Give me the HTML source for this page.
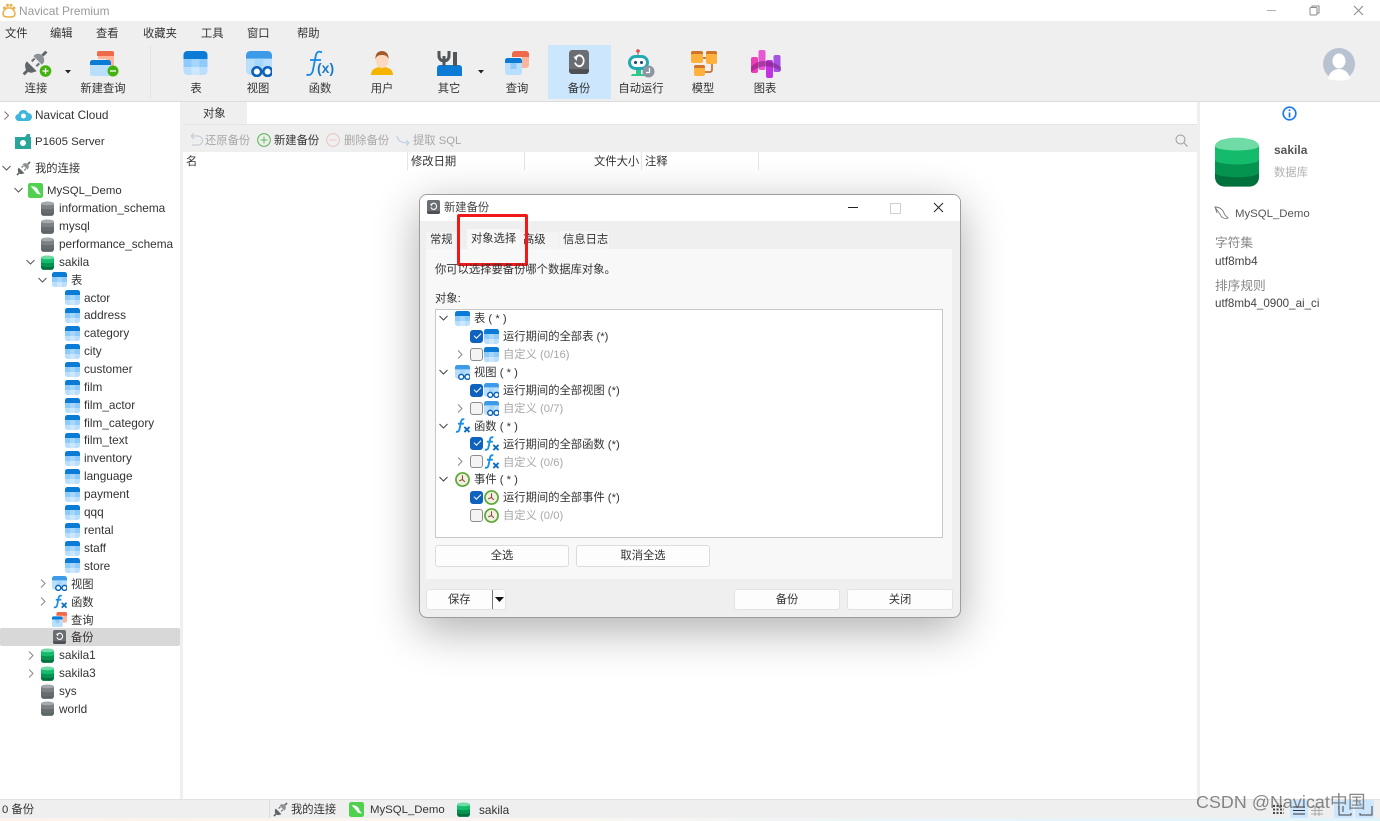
<!DOCTYPE html>
<html lang="zh"><head><meta charset="utf-8"><title>Navicat Premium</title>
<style>
html,body{margin:0;padding:0;width:1380px;height:821px;overflow:hidden;background:#fff}
body{position:relative;font:11.3px/16px "Liberation Sans","Noto Sans CJK SC",sans-serif;color:#333}
.b{position:absolute}
.t{position:absolute;white-space:nowrap;line-height:16px;margin-top:1px}
.c{transform:translateX(-50%)}
.l{font-size:11.8px;margin-top:0}
.m{font-size:11.4px}
.g{color:#a8a8a8}
svg.i{position:absolute;overflow:visible}
.btn{position:absolute;background:#fdfdfd;border:1px solid #dcdcdc;border-radius:3px;box-sizing:border-box;text-align:center;line-height:20px}
.cb{position:absolute;width:13px;height:13px;box-sizing:border-box;border:1px solid #8c8c8c;border-radius:3px;background:#f4f4f4}
.cb.on{background:#0f62bd;border-color:#0f62bd}
.cb.on:after{content:"";position:absolute;left:3px;top:2px;width:6px;height:3px;border-left:1px solid #fff;border-bottom:1px solid #fff;transform:rotate(-45deg)}
</style></head><body>
<svg width="0" height="0" style="position:absolute">
<defs>
<symbol id="tbl" viewBox="0 0 24 24"><rect width="24" height="24" rx="4" fill="#b9dffd"/><path d="M0 8V4a4 4 0 0 1 4-4h16a4 4 0 0 1 4 4v4z" fill="#0b7bd6"/><rect x="0" y="8" width="8" height="8" fill="#8ecbfb"/><rect x="8" y="8" width="8" height="8" fill="#a5d6fc"/><rect x="16" y="8" width="8" height="8" fill="#8ecbfb"/><rect x="8" y="16" width="8" height="8" fill="#cde8fe"/></symbol>
<symbol id="view" viewBox="0 0 24 24"><rect width="24" height="22" rx="4" fill="#b9dffd"/><path d="M0 7V4a4 4 0 0 1 4-4h16a4 4 0 0 1 4 4v3z" fill="#3d9ae8"/><rect x="8" y="7" width="8" height="7" fill="#a5d6fc"/><circle cx="10" cy="19" r="4" fill="#fff" stroke="#0b62b8" stroke-width="2.4"/><circle cx="20" cy="19" r="4" fill="#fff" stroke="#0b62b8" stroke-width="2.4"/></symbol>
<symbol id="fx" viewBox="0 0 16 16"><path d="M10 1.500C7.800 .8 6.800 2 6.400 4L4.800 12C4.400 14 3.200 15 1 14.600M3.200 6H9.500" fill="none" stroke="#1a8fe8" stroke-width="2"/><path d="M10 9.500l5.500 5.500M15.500 9.500l-5.500 5.500" stroke="#0b6cc4" stroke-width="2"/></symbol>
<symbol id="dbg" viewBox="0 0 14 16"><rect y="1" width="14" height="15" rx="3" fill="#5d6468"/><ellipse cx="7" cy="3" rx="7" ry="2.600" fill="#a4a9ad"/><path d="M0 3c0 2 14 2 14 0v4.500c0 2-14 2-14 0z" fill="#7b8185"/><path d="M0 7.500c0 2 14 2 14 0v4c0 2-14 2-14 0z" fill="#666c70"/></symbol>
<symbol id="dbv" viewBox="0 0 14 16"><rect y="1" width="14" height="15" rx="3" fill="#00703c"/><ellipse cx="7" cy="3" rx="7" ry="2.600" fill="#6fdca5"/><path d="M0 3c0 2 14 2 14 0v4.500c0 2-14 2-14 0z" fill="#14bb6b"/><path d="M0 7.500c0 2 14 2 14 0v4c0 2-14 2-14 0z" fill="#059350"/></symbol>
<symbol id="clk" viewBox="0 0 16 16"><circle cx="8" cy="8" r="7" fill="#f1efe2" stroke="#58a832" stroke-width="1.800"/><path d="M8 3.500V8L4.500 9.500M8 8l2.500 2.500" fill="none" stroke="#8a4a32" stroke-width="1.100"/></symbol>
<symbol id="plug" viewBox="0 0 16 16"><path d="M1 15L3.800 12.200" stroke="#5f6569" stroke-width="1.800"/><path d="M3 7L9 13a3.800 3.800 0 0 1-1.500.500L6 14a3.800 3.800 0 0 1-4-3.500 3.800 3.800 0 0 1 1-3.500z" fill="#5f6569"/><path d="M6 7L7.800 5.200M8.800 10L10.600 8.200" stroke="#6c7276" stroke-width="1.300"/><path d="M7 3.800L12.200 9A3.600 3.600 0 0 0 13 4 3.600 3.600 0 0 0 7 3.800z" fill="#8b9195"/><path d="M12.600 3.400L15 1" stroke="#5f6569" stroke-width="1.800"/></symbol>
<symbol id="dol" viewBox="0 0 16 16"><rect x="0" y="0" width="16" height="16" rx="2.500" fill="#4fd14f"/><path d="M3 3.500C7 3 10 5 11 8c.5 1.500 1.500 3 3 4-3 .5-5-.5-6-2.500C7 7.500 5 6.500 3 3.500z" fill="#fff"/></symbol>
<symbol id="qry" viewBox="0 0 24 24"><path d="M9 0h12a3 3 0 0 1 3 3v11a3 3 0 0 1-3 3h-4V6H9z" fill="#fdb49c"/><path d="M7 6V3a3 3 0 0 1 3-3h11a3 3 0 0 1 3 3v3z" fill="#ee6a4a"/><rect x="0" y="7" width="17" height="17" rx="2.500" fill="#b9dffd"/><path d="M0 12V9.500A2.500 2.500 0 0 1 2.500 7h12A2.500 2.500 0 0 1 17 9.500V12z" fill="#0b7bd6"/><rect x="5.500" y="12" width="6" height="6" fill="#8ecbfb"/></symbol>
<symbol id="bak" viewBox="0 0 20 20" preserveAspectRatio="none"><rect width="20" height="20" rx="3" fill="#6a6e73"/><path d="M0 16h20v1a3 3 0 0 1-3 3H3a3 3 0 0 1-3-3z" fill="#4c4f53"/><path d="M6.500 6.500A4.500 4.500 0 1 1 6 10.500" fill="none" stroke="#fff" stroke-width="1.600"/><path d="M4.500 5.500l4 .2-1 3.500z" fill="#fff"/></symbol>
</defs></svg>

<!-- title bar -->
<svg class="i" style="left:2px;top:3px" width="14" height="15" viewBox="0 0 14 15"><path d="M7 5c3-1 6 3 6 6s-3 3-6 3-6 0-6-3 3-7 6-6z" fill="#fff" stroke="#e6b14e" stroke-width="1.500"/><circle cx="2.500" cy="5" r="1.500" fill="#e6b14e"/><circle cx="5.500" cy="2.200" r="1.500" fill="#e6b14e"/><circle cx="9" cy="2.200" r="1.500" fill="#e6b14e"/><circle cx="12" cy="5" r="1.500" fill="#e6b14e"/></svg>
<span class="t" style="left:19px;top:2px;color:#9a9a9a;font-size:11.9px">Navicat Premium</span>
<div class="b" style="left:1267px;top:10px;width:9px;height:1px;background:#b0b0b0"></div>
<svg class="i" style="left:1309px;top:5px" width="11" height="11" viewBox="0 0 11 11"><path d="M3 2.500V1h7v7H8.500" fill="none" stroke="#8a8a8a"/><rect x="1" y="2.500" width="7" height="7.500" rx="1" fill="none" stroke="#8a8a8a"/></svg>
<svg class="i" style="left:1353px;top:5px" width="11" height="11" viewBox="0 0 11 11"><path d="M1 1l9 9M10 1l-9 9" stroke="#8a8a8a"/></svg>

<!-- menu + toolbar -->
<div class="b" style="left:0;top:21px;width:1380px;height:80px;background:#efefef"></div>
<div class="b" style="left:0;top:101px;width:1380px;height:1px;background:#dcdcdc"></div>
<span class="t" style="left:5px;top:25px">文件</span><span class="t" style="left:50px;top:25px">编辑</span><span class="t" style="left:96px;top:25px">查看</span><span class="t" style="left:143px;top:25px">收藏夹</span><span class="t" style="left:201px;top:25px">工具</span><span class="t" style="left:247px;top:25px">窗口</span><span class="t" style="left:297px;top:25px">帮助</span>
<div class="b" style="left:150px;top:46px;width:1px;height:52px;background:#e4e4e4"></div>
<div class="b" style="left:548px;top:45px;width:63px;height:54px;background:#cbe6fd"></div>

<svg class="i" style="left:22px;top:50px" width="30" height="28" viewBox="0 0 30 28"><use href="#plug" x="0" y="0" width="26" height="26"/><circle cx="23.500" cy="21" r="5.800" fill="#45b30f"/><path d="M20.500 21h6M23.500 18v6" stroke="#fff" stroke-width="1.300"/></svg>
<svg class="i" style="left:65px;top:70px" width="6" height="4"><path d="M0 0h6L3 3.500z" fill="#222"/></svg>
<svg class="i" style="left:90px;top:50px" width="29" height="27" viewBox="0 0 29 27"><path d="M8 1h14a2 2 0 0 1 2 2v16h-8V9H8z" fill="#fdb49c"/><path d="M7 6V3a2 2 0 0 1 2-2h13a2 2 0 0 1 2 2v3z" fill="#ee6a4a"/><rect x="0" y="10" width="21" height="16" rx="2.500" fill="#b9dffd"/><path d="M0 15v-2.500A2.500 2.500 0 0 1 2.500 10h16a2.500 2.500 0 0 1 2.500 2.500V15z" fill="#0b7bd6"/><circle cx="23" cy="21" r="5.500" fill="#45b30f"/><path d="M20 21h6" stroke="#fff" stroke-width="1.300"/></svg>
<svg class="i" style="left:183px;top:51px" width="25" height="24"><use href="#tbl"/></svg>
<svg class="i" style="left:246px;top:51px" width="26" height="26"><use href="#view"/></svg>
<svg class="i" style="left:305px;top:50px" width="30" height="27" viewBox="0 0 30 27"><path d="M17 2.500C13.500 .5 11.500 2 10.700 6L8 20C7.300 24 5 26 1.500 24.500M5 10h11" fill="none" stroke="#1288e6" stroke-width="1.800"/><text x="12" y="23" font-family="Liberation Sans,sans-serif" font-size="14" font-weight="bold" fill="#1a7cc9">(x)</text></svg>
<svg class="i" style="left:371px;top:50px" width="22" height="26" viewBox="0 0 22 26"><path d="M0 25c0-6 5-8 11-8s11 2 11 8z" fill="#f5b400"/><ellipse cx="11" cy="10" rx="6.500" ry="8" fill="#fbd9be"/><path d="M4.500 9C4 3 8 1 11 1s7 2 6.500 8C16 5 13 5 11 5S6 5 4.500 9z" fill="#a35a2a"/></svg>
<svg class="i" style="left:437px;top:50px" width="25" height="26" viewBox="0 0 25 26"><path d="M0 18a3 3 0 0 1 3-3h19a3 3 0 0 1 3 3v8H0z" fill="#0b7bd6"/><path d="M7 16V6M2 1v5a5 5 0 0 0 10 0V1" fill="none" stroke="#50565a" stroke-width="3"/><path d="M18 16V2" stroke="#50565a" stroke-width="4"/></svg>
<svg class="i" style="left:478px;top:70px" width="6" height="4"><path d="M0 0h6L3 3.500z" fill="#222"/></svg>
<svg class="i" style="left:505px;top:50px" width="24" height="26"><use href="#qry"/></svg>
<svg class="i" style="left:569px;top:50px" width="20" height="24"><use href="#bak"/></svg>
<svg class="i" style="left:627px;top:49px" width="28" height="29" viewBox="0 0 28 29"><circle cx="11" cy="2" r="1.800" fill="#ef4444"/><path d="M11 3v3" stroke="#777"/><rect x="1" y="6" width="21" height="15" rx="7.500" fill="#23a9b3"/><rect x="4" y="9" width="15" height="9" rx="4.500" fill="#fff"/><circle cx="8.500" cy="13.500" r="1.500" fill="#1c3d72"/><circle cx="14.500" cy="13.500" r="1.500" fill="#1c3d72"/><path d="M5 25h13l2 2H4z" fill="#2fc78c"/><rect x="9" y="21" width="5" height="4" fill="#2fc78c"/><circle cx="21.500" cy="22.500" r="6" fill="#8d97a3"/><path d="M22.500 19v4.500H19" fill="none" stroke="#fff" stroke-width="1.200"/></svg>
<svg class="i" style="left:690px;top:50px" width="27" height="26" viewBox="0 0 27 26"><path d="M13 8h4M22 13v7a2 2 0 0 1-2 2h-6" fill="none" stroke="#c9702a" stroke-width="1.700"/><rect x="1" y="1" width="12" height="12" rx="2" fill="#ffb13d"/><path d="M1 4V3a2 2 0 0 1 2-2h8a2 2 0 0 1 2 2v1z" fill="#d0742c"/><rect x="16" y="1" width="11" height="13" rx="2" fill="#ffb13d"/><path d="M16 4V3a2 2 0 0 1 2-2h7a2 2 0 0 1 2 2v1z" fill="#d0742c"/><rect x="4" y="15" width="11" height="11" rx="2" fill="#ffb13d"/><path d="M4 18v-1a2 2 0 0 1 2-2h7a2 2 0 0 1 2 2v1z" fill="#d0742c"/></svg>
<svg class="i" style="left:751px;top:49px" width="30" height="29" viewBox="0 0 30 29"><rect x="0" y="8" width="7" height="16" rx="2" fill="#ee3fb5"/><rect x="7.500" y="1" width="7" height="20" rx="2" fill="#e857d2"/><rect x="15" y="11" width="7" height="18" rx="2" fill="#c133df"/><rect x="22.500" y="6" width="7" height="17" rx="2" fill="#a552e4"/><path d="M0 18c8-9 20-7 30 0v4c-10-6-20-7-30 1z" fill="#7c1f7c" opacity=".55"/></svg>

<span class="t c" style="left:36px;top:80px">连接</span><span class="t c" style="left:103px;top:80px">新建查询</span><span class="t c" style="left:196px;top:80px">表</span><span class="t c" style="left:258px;top:80px">视图</span><span class="t c" style="left:320px;top:80px">函数</span><span class="t c" style="left:382px;top:80px">用户</span><span class="t c" style="left:449px;top:80px">其它</span><span class="t c" style="left:517px;top:80px">查询</span><span class="t c" style="left:579px;top:80px">备份</span><span class="t c" style="left:641px;top:80px">自动运行</span><span class="t c" style="left:703px;top:80px">模型</span><span class="t c" style="left:765px;top:80px">图表</span>

<svg class="i" style="left:1323px;top:48px" width="32" height="32" viewBox="0 0 32 32"><circle cx="16" cy="16" r="16" fill="#b9c2d0"/><ellipse cx="16" cy="13" rx="6.500" ry="7.500" fill="#fff"/><path d="M5 31c1-7 6-10 11-10s10 3 11 10c-3 1-7 1.500-11 1.500S8 32 5 31z" fill="#fff"/></svg>

<!-- gutters -->
<div class="b" style="left:180px;top:102px;width:3px;height:697px;background:#efefef"></div>
<div class="b" style="left:1197px;top:102px;width:3px;height:697px;background:#efefef"></div>

<!-- main tabs -->
<div class="b" style="left:183px;top:102px;width:64px;height:23px;background:#efefef"></div>
<span class="t" style="left:203px;top:105px">对象</span>
<div class="b" style="left:183px;top:124px;width:1014px;height:1px;background:#e4e4e4"></div>
<div class="b" style="left:183px;top:125px;width:1014px;height:27px;background:#efefef"></div>
<svg class="i" style="left:188px;top:133px" width="15" height="14" viewBox="0 0 15 14"><path d="M3 3h7a4 4 0 0 1 0 9H4M3 3l3-2.500M3 3l3 3" fill="none" stroke="#c4ced6" stroke-width="1.200"/></svg>
<span class="t g" style="left:205px;top:132px">还原备份</span>
<svg class="i" style="left:257px;top:133px" width="14" height="14" viewBox="0 0 14 14"><circle cx="7" cy="7" r="6.300" fill="none" stroke="#5cb85c" stroke-width="1.100"/><path d="M3.500 7h7M7 3.500v7" stroke="#5cb85c"/></svg>
<span class="t" style="left:274px;top:132px">新建备份</span>
<svg class="i" style="left:326px;top:133px" width="14" height="14" viewBox="0 0 14 14"><circle cx="7" cy="7" r="6.300" fill="none" stroke="#e8c8c4" stroke-width="1.100"/><path d="M3.500 7h7" stroke="#e8c8c4"/></svg>
<span class="t g" style="left:344px;top:132px">删除备份</span>
<svg class="i" style="left:396px;top:133px" width="15" height="14" viewBox="0 0 15 14"><path d="M1 3c1 5 4 7 12 7M13 10l-3-3M13 10l-3 3" fill="none" stroke="#bcd2e4" stroke-width="1.200"/></svg>
<span class="t g" style="left:413px;top:132px">提取 SQL</span>
<svg class="i" style="left:1175px;top:134px" width="13" height="13" viewBox="0 0 13 13"><circle cx="5.500" cy="5.500" r="4.500" fill="none" stroke="#9a9a9a"/><path d="M9 9l3.500 3.500" stroke="#9a9a9a"/></svg>
<span class="t" style="left:186px;top:153px">名</span>
<div class="b" style="left:407px;top:152px;width:1px;height:18px;background:#e4e4e4"></div>
<span class="t" style="left:411px;top:153px">修改日期</span>
<div class="b" style="left:524px;top:152px;width:1px;height:18px;background:#e4e4e4"></div>
<span class="t" style="left:594px;top:153px">文件大小</span>
<div class="b" style="left:641px;top:152px;width:1px;height:18px;background:#e4e4e4"></div>
<span class="t" style="left:645px;top:153px">注释</span>
<div class="b" style="left:758px;top:152px;width:1px;height:18px;background:#e4e4e4"></div>

<!-- sidebar -->
<svg class="i" style="left:3px;top:111px" width="7" height="9" viewBox="0 0 7 9"><path d="M1.500 .5l4 4-4 4" fill="none" stroke="#777"/></svg>
<svg class="i" style="left:15px;top:108px" width="16" height="14" viewBox="0 0 16 14"><path d="M4 13a3.500 3.500 0 0 1-.5-7A5 5 0 0 1 13 5a4 4 0 0 1 0 8z" fill="#3eb6dc"/><circle cx="8.500" cy="8" r="2.500" fill="#fff"/></svg>
<span class="t l" style="left:35px;top:107px">Navicat Cloud</span>
<svg class="i" style="left:15px;top:134px" width="16" height="15" viewBox="0 0 16 15"><path d="M0 3h16v12H0z" fill="#2aa59a"/><path d="M10 3l2-3h3v3z" fill="#2aa59a"/><circle cx="8" cy="9" r="3" fill="#fff"/></svg>
<span class="t m" style="left:35px;top:133px">P1605 Server</span>
<svg class="i" style="left:2px;top:165px" width="9" height="6" viewBox="0 0 9 6"><path d="M.5 1l4 4 4-4" fill="none" stroke="#555"/></svg>
<svg class="i" style="left:16px;top:161px" width="15" height="15"><use href="#plug"/></svg>
<span class="t" style="left:35px;top:160px">我的连接</span>
<svg class="i" style="left:14px;top:187px" width="9" height="6" viewBox="0 0 9 6"><path d="M.5 1l4 4 4-4" fill="none" stroke="#555"/></svg>
<svg class="i" style="left:28px;top:183px" width="15" height="15"><use href="#dol"/></svg>
<span class="t m" style="left:47px;top:182px">MySQL_Demo</span>
<svg class="i" style="left:41px;top:201px" width="13" height="15"><use href="#dbg"/></svg><span class="t l" style="left:59px;top:200px">information_schema</span>
<svg class="i" style="left:41px;top:219px" width="13" height="15"><use href="#dbg"/></svg><span class="t l" style="left:59px;top:218px">mysql</span>
<svg class="i" style="left:41px;top:237px" width="13" height="15"><use href="#dbg"/></svg><span class="t l" style="left:59px;top:236px">performance_schema</span>
<svg class="i" style="left:26px;top:259px" width="9" height="6" viewBox="0 0 9 6"><path d="M.5 1l4 4 4-4" fill="none" stroke="#555"/></svg>
<svg class="i" style="left:41px;top:255px" width="13" height="15"><use href="#dbv"/></svg><span class="t l" style="left:59px;top:254px">sakila</span>
<svg class="i" style="left:38px;top:277px" width="9" height="6" viewBox="0 0 9 6"><path d="M.5 1l4 4 4-4" fill="none" stroke="#555"/></svg>
<svg class="i" style="left:52px;top:272px" width="15" height="15"><use href="#tbl"/></svg><span class="t" style="left:71px;top:272px">表</span>
<svg class="i" style="left:65px;top:290px" width="15" height="15"><use href="#tbl"/></svg><span class="t l" style="left:84px;top:290px">actor</span>
<svg class="i" style="left:65px;top:308px" width="15" height="15"><use href="#tbl"/></svg><span class="t l" style="left:84px;top:307px">address</span>
<svg class="i" style="left:65px;top:326px" width="15" height="15"><use href="#tbl"/></svg><span class="t l" style="left:84px;top:325px">category</span>
<svg class="i" style="left:65px;top:344px" width="15" height="15"><use href="#tbl"/></svg><span class="t l" style="left:84px;top:343px">city</span>
<svg class="i" style="left:65px;top:362px" width="15" height="15"><use href="#tbl"/></svg><span class="t l" style="left:84px;top:361px">customer</span>
<svg class="i" style="left:65px;top:380px" width="15" height="15"><use href="#tbl"/></svg><span class="t l" style="left:84px;top:379px">film</span>
<svg class="i" style="left:65px;top:398px" width="15" height="15"><use href="#tbl"/></svg><span class="t l" style="left:84px;top:397px">film_actor</span>
<svg class="i" style="left:65px;top:415px" width="15" height="15"><use href="#tbl"/></svg><span class="t l" style="left:84px;top:415px">film_category</span>
<svg class="i" style="left:65px;top:433px" width="15" height="15"><use href="#tbl"/></svg><span class="t l" style="left:84px;top:432px">film_text</span>
<svg class="i" style="left:65px;top:451px" width="15" height="15"><use href="#tbl"/></svg><span class="t l" style="left:84px;top:450px">inventory</span>
<svg class="i" style="left:65px;top:469px" width="15" height="15"><use href="#tbl"/></svg><span class="t l" style="left:84px;top:468px">language</span>
<svg class="i" style="left:65px;top:487px" width="15" height="15"><use href="#tbl"/></svg><span class="t l" style="left:84px;top:486px">payment</span>
<svg class="i" style="left:65px;top:505px" width="15" height="15"><use href="#tbl"/></svg><span class="t l" style="left:84px;top:504px">qqq</span>
<svg class="i" style="left:65px;top:523px" width="15" height="15"><use href="#tbl"/></svg><span class="t l" style="left:84px;top:522px">rental</span>
<svg class="i" style="left:65px;top:541px" width="15" height="15"><use href="#tbl"/></svg><span class="t l" style="left:84px;top:540px">staff</span>
<svg class="i" style="left:65px;top:558px" width="15" height="15"><use href="#tbl"/></svg><span class="t l" style="left:84px;top:558px">store</span>
<svg class="i" style="left:40px;top:579px" width="6" height="9" viewBox="0 0 6 9"><path d="M1 .5l4 4-4 4" fill="none" stroke="#888"/></svg>
<svg class="i" style="left:52px;top:576px" width="15" height="15"><use href="#view"/></svg><span class="t" style="left:71px;top:576px">视图</span>
<svg class="i" style="left:40px;top:597px" width="6" height="9" viewBox="0 0 6 9"><path d="M1 .5l4 4-4 4" fill="none" stroke="#888"/></svg>
<svg class="i" style="left:53px;top:594px" width="14" height="15"><use href="#fx"/></svg><span class="t" style="left:71px;top:594px">函数</span>
<svg class="i" style="left:52px;top:612px" width="15" height="15"><use href="#qry"/></svg><span class="t" style="left:71px;top:612px">查询</span>
<div class="b" style="left:0;top:628px;width:180px;height:18px;background:#d8d8d8;border-radius:2px"></div>
<svg class="i" style="left:53px;top:630px" width="13" height="14"><use href="#bak"/></svg><span class="t" style="left:71px;top:629px">备份</span>
<svg class="i" style="left:28px;top:651px" width="6" height="9" viewBox="0 0 6 9"><path d="M1 .5l4 4-4 4" fill="none" stroke="#888"/></svg>
<svg class="i" style="left:41px;top:648px" width="13" height="15"><use href="#dbv"/></svg><span class="t l" style="left:59px;top:647px">sakila1</span>
<svg class="i" style="left:28px;top:669px" width="6" height="9" viewBox="0 0 6 9"><path d="M1 .5l4 4-4 4" fill="none" stroke="#888"/></svg>
<svg class="i" style="left:41px;top:666px" width="13" height="15"><use href="#dbv"/></svg><span class="t l" style="left:59px;top:665px">sakila3</span>
<svg class="i" style="left:41px;top:684px" width="13" height="15"><use href="#dbg"/></svg><span class="t l" style="left:59px;top:683px">sys</span>
<svg class="i" style="left:41px;top:701px" width="13" height="15"><use href="#dbg"/></svg><span class="t l" style="left:59px;top:701px">world</span>

<!-- right panel -->
<svg class="i" style="left:1282px;top:106px" width="15" height="15" viewBox="0 0 15 15"><circle cx="7.500" cy="7.500" r="6.300" fill="#fff" stroke="#1a7ae8" stroke-width="1.700"/><path d="M7.500 6.500v5" stroke="#1a7ae8" stroke-width="1.700"/><circle cx="7.500" cy="4.300" r="1" fill="#1a7ae8"/></svg>
<svg class="i" style="left:1215px;top:136px" width="44" height="51"><use href="#dbv"/></svg>
<span class="t" style="left:1274px;top:141px;font-weight:bold;color:#555;font-size:12px">sakila</span>
<span class="t" style="left:1274px;top:164px;color:#b0b0b0">数据库</span>
<svg class="i" style="left:1214px;top:206px" width="15" height="14" viewBox="0 0 15 14"><path d="M1 1c5 0 8 3 9 6 .5 2 2 3 4 5-3 1-6 0-7-2-1-3-4-5-6-9zM1 1l2 6" fill="none" stroke="#777" stroke-width=".9"/></svg>
<span class="t m" style="left:1235px;top:205px;color:#555">MySQL_Demo</span>
<span class="t" style="left:1215px;top:234px;color:#888;font-size:12.700px">字符集</span>
<span class="t l" style="left:1215px;top:253px;color:#444">utf8mb4</span>
<span class="t" style="left:1215px;top:277px;color:#888;font-size:12.700px">排序规则</span>
<span class="t" style="left:1215px;top:295px;color:#444;font-size:11.600px">utf8mb4_0900_ai_ci</span>

<!-- status bar -->
<div class="b" style="left:0;top:799px;width:1380px;height:19px;background:#efefef;border-top:1px solid #e2e2e2;box-sizing:border-box"></div>
<div class="b" style="left:0;top:818px;width:1380px;height:3px;background:linear-gradient(90deg,#fdf1ec,#fbf5f0 40%,#e6f4fa 75%,#dff3fb)"></div>
<span class="t" style="left:2px;top:801px">0 备份</span>
<div class="b" style="left:269px;top:800px;width:1px;height:18px;background:#dcdcdc"></div>
<svg class="i" style="left:273px;top:802px" width="15" height="15"><use href="#plug"/></svg>
<span class="t" style="left:291px;top:801px">我的连接</span>
<svg class="i" style="left:349px;top:802px" width="15" height="15"><use href="#dol"/></svg>
<span class="t m" style="left:370px;top:801px">MySQL_Demo</span>
<svg class="i" style="left:457px;top:802px" width="13" height="15"><use href="#dbv"/></svg>
<span class="t l" style="left:479px;top:802px">sakila</span>
<div class="b" style="left:1290px;top:800px;width:18px;height:18px;background:#cbe6fd;border-radius:2px"></div>
<div class="b" style="left:1334px;top:800px;width:19px;height:18px;background:#cbe6fd;border-radius:2px"></div>
<div class="b" style="left:1355px;top:800px;width:19px;height:18px;background:#cbe6fd;border-radius:2px"></div>
<svg class="i" style="left:1272px;top:805px" width="100" height="12" viewBox="0 0 100 12"><path d="M1 1h11M1 4.500h11M1 8h11" stroke="#444" stroke-width="2" stroke-dasharray="2 1.500"/><path d="M21 2h12M21 5.500h12M21 9h12" stroke="#333"/><path d="M39 2h12M39 5.500h12M39 9h12M43 1v10M47 1v10" stroke="#aaa"/><path d="M67 1v9h12V8M71 1v6" fill="none" stroke="#444"/><path d="M88 8v2h12V1" fill="none" stroke="#444"/></svg>
<span class="t" style="left:1196px;top:791px;font-size:17.800px;line-height:20px;color:rgba(90,90,90,.72);letter-spacing:.1px">CSDN @Navicat中国</span>

<!-- dialog -->
<div class="b" style="left:419px;top:194px;width:542px;height:424px;box-sizing:border-box;background:#efefef;border:1px solid #9c9c9c;border-radius:8px;box-shadow:0 12px 45px rgba(0,0,0,.32)"></div>
<div class="b" style="left:420px;top:195px;width:540px;height:26px;background:#fff;border-radius:7px 7px 0 0"></div>
<svg class="i" style="left:427px;top:200px" width="13" height="14"><use href="#bak"/></svg>
<span class="t" style="left:444px;top:199px;color:#444">新建备份</span>
<div class="b" style="left:848px;top:207px;width:10px;height:1px;background:#222"></div>
<div class="b" style="left:890px;top:203px;width:9px;height:9px;border:1px solid #d0d0d0"></div>
<svg class="i" style="left:933px;top:202px" width="11" height="11" viewBox="0 0 11 11"><path d="M1 1l9 9M10 1l-9 9" stroke="#222"/></svg>
<div class="b" style="left:426px;top:249px;width:526px;height:330px;background:#f8f8f8"></div>
<div class="b" style="left:426px;top:232px;width:31px;height:17px;background:#f4f4f4"></div>
<div class="b" style="left:520px;top:232px;width:38px;height:17px;background:#f4f4f4"></div>
<div class="b" style="left:559px;top:231px;width:50px;height:18px;background:#f4f4f4"></div>
<div class="b" style="left:467px;top:229px;width:53px;height:20px;background:#f8f8f8"></div>
<span class="t" style="left:430px;top:231px">常规</span>
<span class="t" style="left:471px;top:230px">对象选择</span>
<span class="t" style="left:523px;top:231px">高级</span>
<span class="t" style="left:563px;top:231px">信息日志</span>
<div class="b" style="left:457px;top:214px;width:71px;height:52px;box-sizing:border-box;border:3px solid #f01818;border-radius:2px"></div>
<span class="t" style="left:435px;top:261px">你可以选择要备份哪个数据库对象。</span>
<span class="t" style="left:435px;top:290px">对象:</span>
<div class="b" style="left:435px;top:309px;width:508px;height:229px;box-sizing:border-box;background:#fff;border:1px solid #c8c8c8"></div>

<svg class="i" style="left:439px;top:315px" width="9" height="6" viewBox="0 0 9 6"><path d="M.5 1l4 4 4-4" fill="none" stroke="#444"/></svg>
<svg class="i" style="left:455px;top:311px" width="15" height="15"><use href="#tbl"/></svg>
<span class="t" style="left:474px;top:310px">表 ( * )</span>
<div class="cb on" style="left:470px;top:330px"></div>
<svg class="i" style="left:484px;top:329px" width="15" height="15"><use href="#tbl"/></svg>
<span class="t" style="left:503px;top:328px">运行期间的全部表 (*)</span>
<svg class="i" style="left:457px;top:350px" width="6" height="9" viewBox="0 0 6 9"><path d="M1 .5l4 4-4 4" fill="none" stroke="#888"/></svg>
<div class="cb" style="left:470px;top:348px"></div>
<svg class="i" style="left:484px;top:347px" width="15" height="15"><use href="#tbl"/></svg>
<span class="t g" style="left:503px;top:346px">自定义 (0/16)</span>

<svg class="i" style="left:439px;top:369px" width="9" height="6" viewBox="0 0 9 6"><path d="M.5 1l4 4 4-4" fill="none" stroke="#444"/></svg>
<svg class="i" style="left:455px;top:365px" width="15" height="15"><use href="#view"/></svg>
<span class="t" style="left:474px;top:364px">视图 ( * )</span>
<div class="cb on" style="left:470px;top:384px"></div>
<svg class="i" style="left:484px;top:383px" width="15" height="15"><use href="#view"/></svg>
<span class="t" style="left:503px;top:382px">运行期间的全部视图 (*)</span>
<svg class="i" style="left:457px;top:404px" width="6" height="9" viewBox="0 0 6 9"><path d="M1 .5l4 4-4 4" fill="none" stroke="#888"/></svg>
<div class="cb" style="left:470px;top:402px"></div>
<svg class="i" style="left:484px;top:401px" width="15" height="15"><use href="#view"/></svg>
<span class="t g" style="left:503px;top:400px">自定义 (0/7)</span>

<svg class="i" style="left:439px;top:423px" width="9" height="6" viewBox="0 0 9 6"><path d="M.5 1l4 4 4-4" fill="none" stroke="#444"/></svg>
<svg class="i" style="left:455px;top:418px" width="15" height="15"><use href="#fx"/></svg>
<span class="t" style="left:474px;top:418px">函数 ( * )</span>
<div class="cb on" style="left:470px;top:437px"></div>
<svg class="i" style="left:484px;top:436px" width="15" height="15"><use href="#fx"/></svg>
<span class="t" style="left:503px;top:436px">运行期间的全部函数 (*)</span>
<svg class="i" style="left:457px;top:457px" width="6" height="9" viewBox="0 0 6 9"><path d="M1 .5l4 4-4 4" fill="none" stroke="#888"/></svg>
<div class="cb" style="left:470px;top:455px"></div>
<svg class="i" style="left:484px;top:454px" width="15" height="15"><use href="#fx"/></svg>
<span class="t g" style="left:503px;top:454px">自定义 (0/6)</span>

<svg class="i" style="left:439px;top:476px" width="9" height="6" viewBox="0 0 9 6"><path d="M.5 1l4 4 4-4" fill="none" stroke="#444"/></svg>
<svg class="i" style="left:455px;top:472px" width="15" height="15"><use href="#clk"/></svg>
<span class="t" style="left:474px;top:471px">事件 ( * )</span>
<div class="cb on" style="left:470px;top:491px"></div>
<svg class="i" style="left:484px;top:490px" width="15" height="15"><use href="#clk"/></svg>
<span class="t" style="left:503px;top:489px">运行期间的全部事件 (*)</span>
<div class="cb" style="left:470px;top:509px"></div>
<svg class="i" style="left:484px;top:508px" width="15" height="15"><use href="#clk"/></svg>
<span class="t g" style="left:503px;top:507px">自定义 (0/0)</span>

<div class="btn" style="left:435px;top:545px;width:134px;height:22px">全选</div>
<div class="btn" style="left:576px;top:545px;width:134px;height:22px">取消全选</div>
<div class="btn" style="left:426px;top:589px;width:80px;height:21px;text-align:left;padding-left:21px;line-height:21px;border-color:#e2e2e2">保存</div>
<div class="b" style="left:492px;top:590px;width:1px;height:19px;background:#777"></div>
<svg class="i" style="left:495px;top:597px" width="9" height="5"><path d="M0 0h9L4.500 5z" fill="#111"/></svg>
<div class="btn" style="left:734px;top:589px;width:106px;height:21px;line-height:21px;border-color:#e2e2e2">备份</div>
<div class="btn" style="left:847px;top:589px;width:106px;height:21px;line-height:21px;border-color:#e2e2e2">关闭</div>
</body></html>
